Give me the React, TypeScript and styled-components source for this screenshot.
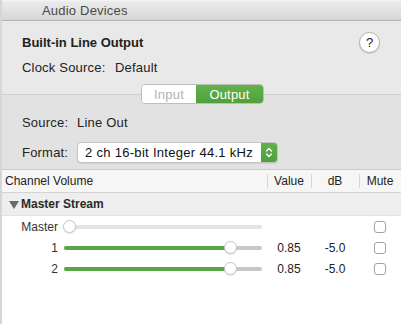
import styled, { createGlobalStyle } from "styled-components";

const GlobalStyle = createGlobalStyle`
  html, body {
    margin: 0;
    padding: 0;
    background: #ffffff;
  }
  body {
    font-family: "Liberation Sans", Arial, sans-serif;
    color: #1d1d1d;
  }
`;

const channels = [
  { name: "Master", value: null as number | null, db: "", active: false },
  { name: "1", value: 0.85, db: "-5.0", active: true },
  { name: "2", value: 0.85, db: "-5.0", active: true },
];

const Window = styled.div`
  width: 401px;
  height: 324px;
  box-sizing: border-box;
  border-left: 2px solid #d6d6d6;
  background: #ffffff;
  overflow: hidden;
  display: flex;
  flex-direction: column;
`;

const TitleBar = styled.div`
  height: 21px;
  flex: none;
  box-sizing: border-box;
  padding-left: 40px;
  display: flex;
  align-items: center;
  background: linear-gradient(#ececec, #d6d6d6);
  border-top: 1px solid #f4f4f4;
  border-bottom: 1px solid #b3b3b3;
  font-size: 13px;
  letter-spacing: 0.2px;
  color: #4a4a4a;
`;

const DevicePanel = styled.div`
  height: 74px;
  flex: none;
  box-sizing: border-box;
  padding: 14px 21px 0 20px;
  background: #e9e9e9;
  border-bottom: 1px solid #cfcfcf;
  display: flex;
  justify-content: space-between;
  align-items: flex-start;
`;

const DeviceInfo = styled.div`
  display: flex;
  flex-direction: column;
  gap: 10px;
`;

const DeviceName = styled.div`
  font-size: 13px;
  font-weight: bold;
  color: #222;
`;

const InfoLine = styled.div`
  display: flex;
  font-size: 13px;
  letter-spacing: 0.2px;
  color: #222;
`;

const InfoLabel = styled.span<{ $w: number }>`
  width: ${(p) => p.$w}px;
  flex: none;
`;

const HelpButton = styled.div`
  width: 19px;
  height: 19px;
  margin-top: -3px;
  border-radius: 50%;
  border: 1px solid #b0b0b0;
  background: #ffffff;
  box-shadow: 0 1px 1px rgba(0, 0, 0, 0.12);
  display: flex;
  align-items: center;
  justify-content: center;
  font-size: 13px;
  color: #222;
`;

const StreamPanel = styled.div`
  height: 75px;
  flex: none;
  box-sizing: border-box;
  background: #e2e2e2;
  border-bottom: 1px solid #c9c9c9;
  padding: 0 20px;
  display: flex;
  flex-direction: column;
`;

const SegmentRow = styled.div`
  position: relative;
  margin-top: -11px;
  display: flex;
  justify-content: center;
  padding-left: 2px;
`;

const Segmented = styled.div`
  display: flex;
  height: 20px;
  box-sizing: border-box;
  border: 1px solid #bdbdbd;
  border-radius: 4px;
  overflow: hidden;
  background: #ffffff;
`;

const Segment = styled.div<{ $on?: boolean; $w: number }>`
  width: ${(p) => p.$w}px;
  display: flex;
  align-items: center;
  justify-content: center;
  font-size: 13px;
  letter-spacing: 0.2px;
  color: ${(p) => (p.$on ? "#ffffff" : "#b3b3b3")};
  background: ${(p) => (p.$on ? "linear-gradient(#62b24c, #4f9f3b)" : "#ffffff")};
`;

const StreamLine = styled.div<{ $mt: number }>`
  margin-top: ${(p) => p.$mt}px;
  display: flex;
  align-items: center;
  font-size: 13px;
  letter-spacing: 0.2px;
  color: #222;
`;

const Popup = styled.div`
  width: 201px;
  height: 21px;
  box-sizing: border-box;
  border: 1px solid #c4c4c4;
  border-radius: 4px;
  background: #ffffff;
  display: flex;
  overflow: hidden;
  box-shadow: 0 1px 1px rgba(0, 0, 0, 0.08);
`;

const PopupText = styled.div`
  flex: 1;
  display: flex;
  align-items: center;
  padding-left: 7px;
  font-size: 13px;
  letter-spacing: 0.3px;
  color: #111;
`;

const Stepper = styled.div`
  width: 16px;
  background: linear-gradient(#62b24c, #4f9f3b);
  display: flex;
  align-items: center;
  justify-content: center;
`;

const Table = styled.div`
  display: grid;
  grid-template-columns: 265px 44px 48px 1fr;
  font-size: 12px;
  color: #222;
`;

const HeadCell = styled.div<{ $sep?: boolean; $left?: boolean }>`
  height: 23px;
  box-sizing: border-box;
  border-bottom: 1px solid #d4d4d4;
  background: #f6f6f6;
  display: flex;
  align-items: center;
  justify-content: ${(p) => (p.$left ? "flex-start" : "center")};
  padding-left: ${(p) => (p.$left ? "3px" : "0")};
  position: relative;
  ${(p) =>
    p.$sep &&
    `&::before {
      content: "";
      position: absolute;
      left: 0;
      top: 4px;
      bottom: 4px;
      border-left: 1px solid #d6d6d6;
    }`}
`;

const GroupRow = styled.div`
  grid-column: 1 / -1;
  height: 23px;
  box-sizing: border-box;
  background: #eeeeee;
  border-bottom: 1px solid #e2e2e2;
  display: flex;
  align-items: center;
  padding-left: 7px;
  gap: 2px;
  font-size: 12px;
  font-weight: bold;
  color: #2a2a2a;
`;

const Triangle = styled.span`
  width: 0;
  height: 0;
  border-left: 5px solid transparent;
  border-right: 5px solid transparent;
  border-top: 8px solid #6a6a6a;
  margin-top: 1px;
`;

const ChannelCell = styled.div`
  height: 21px;
  display: flex;
  align-items: center;
`;

const ChannelName = styled.div`
  width: 56px;
  flex: none;
  text-align: right;
  font-size: 12px;
  color: #333;
`;

const Track = styled.div<{ $active: boolean }>`
  position: relative;
  margin-left: 6px;
  width: 198px;
  height: 4px;
  border-radius: 2px;
  background: ${(p) => (p.$active ? "#c7c7c7" : "#e4e4e4")};
`;

const Fill = styled.div`
  position: absolute;
  left: 0;
  top: 0;
  bottom: 0;
  border-radius: 2px;
  background: #57a844;
`;

const Knob = styled.div`
  position: absolute;
  top: 50%;
  width: 13px;
  height: 13px;
  margin-left: -6.5px;
  margin-top: -6.5px;
  box-sizing: border-box;
  border-radius: 50%;
  background: #ffffff;
  border: 1px solid #c4c4c4;
  box-shadow: 0 1px 1px rgba(0, 0, 0, 0.1);
`;

const NumCell = styled.div`
  height: 21px;
  display: flex;
  align-items: center;
  justify-content: center;
  font-size: 12px;
  color: #222;
`;

const Checkbox = styled.div`
  width: 12px;
  height: 12px;
  box-sizing: border-box;
  border: 1px solid #a2a2a2;
  border-radius: 3px;
  background: #ffffff;
`;

const Chevrons = () => (
  <svg width="8" height="13" viewBox="0 0 8 13">
    <path d="M1.5 5 L4 2.5 L6.5 5" fill="none" stroke="#fff" strokeWidth="1.3" strokeLinecap="round" strokeLinejoin="round" />
    <path d="M1.5 8 L4 10.5 L6.5 8" fill="none" stroke="#fff" strokeWidth="1.3" strokeLinecap="round" strokeLinejoin="round" />
  </svg>
);

export default function App() {
  return (
    <>
      <GlobalStyle />
      <Window>
        <TitleBar>Audio Devices</TitleBar>
        <DevicePanel>
          <DeviceInfo>
            <DeviceName>Built-in Line Output</DeviceName>
            <InfoLine>
              <InfoLabel $w={93}>Clock Source:</InfoLabel>
              <span>Default</span>
            </InfoLine>
          </DeviceInfo>
          <HelpButton>?</HelpButton>
        </DevicePanel>
        <StreamPanel>
          <SegmentRow>
            <Segmented>
              <Segment $w={54}>Input</Segment>
              <Segment $w={67} $on>
                Output
              </Segment>
            </Segmented>
          </SegmentRow>
          <StreamLine $mt={11}>
            <InfoLabel $w={55}>Source:</InfoLabel>
            <span>Line Out</span>
          </StreamLine>
          <StreamLine $mt={12}>
            <InfoLabel $w={55}>Format:</InfoLabel>
            <Popup>
              <PopupText>2 ch 16-bit Integer 44.1 kHz</PopupText>
              <Stepper>
                <Chevrons />
              </Stepper>
            </Popup>
          </StreamLine>
        </StreamPanel>
        <Table>
          <HeadCell $left>Channel Volume</HeadCell>
          <HeadCell $sep>Value</HeadCell>
          <HeadCell $sep>dB</HeadCell>
          <HeadCell $sep>Mute</HeadCell>
          <GroupRow>
            <Triangle />
            Master Stream
          </GroupRow>
          {channels.map((c) => (
            <>
              <ChannelCell key={c.name + "s"}>
                <ChannelName>{c.name}</ChannelName>
                <Track $active={c.active}>
                  {c.value !== null && <Fill style={{ width: `${c.value * 100 - 1}%` }} />}
                  <Knob style={{ left: c.value !== null ? `calc(${c.value} * 198px - 2px)` : "5.5px" }} />
                </Track>
              </ChannelCell>
              <NumCell key={c.name + "v"}>{c.value !== null ? c.value.toFixed(2) : ""}</NumCell>
              <NumCell key={c.name + "d"}>{c.db}</NumCell>
              <NumCell key={c.name + "m"}>
                <Checkbox />
              </NumCell>
            </>
          ))}
        </Table>
      </Window>
    </>
  );
}
